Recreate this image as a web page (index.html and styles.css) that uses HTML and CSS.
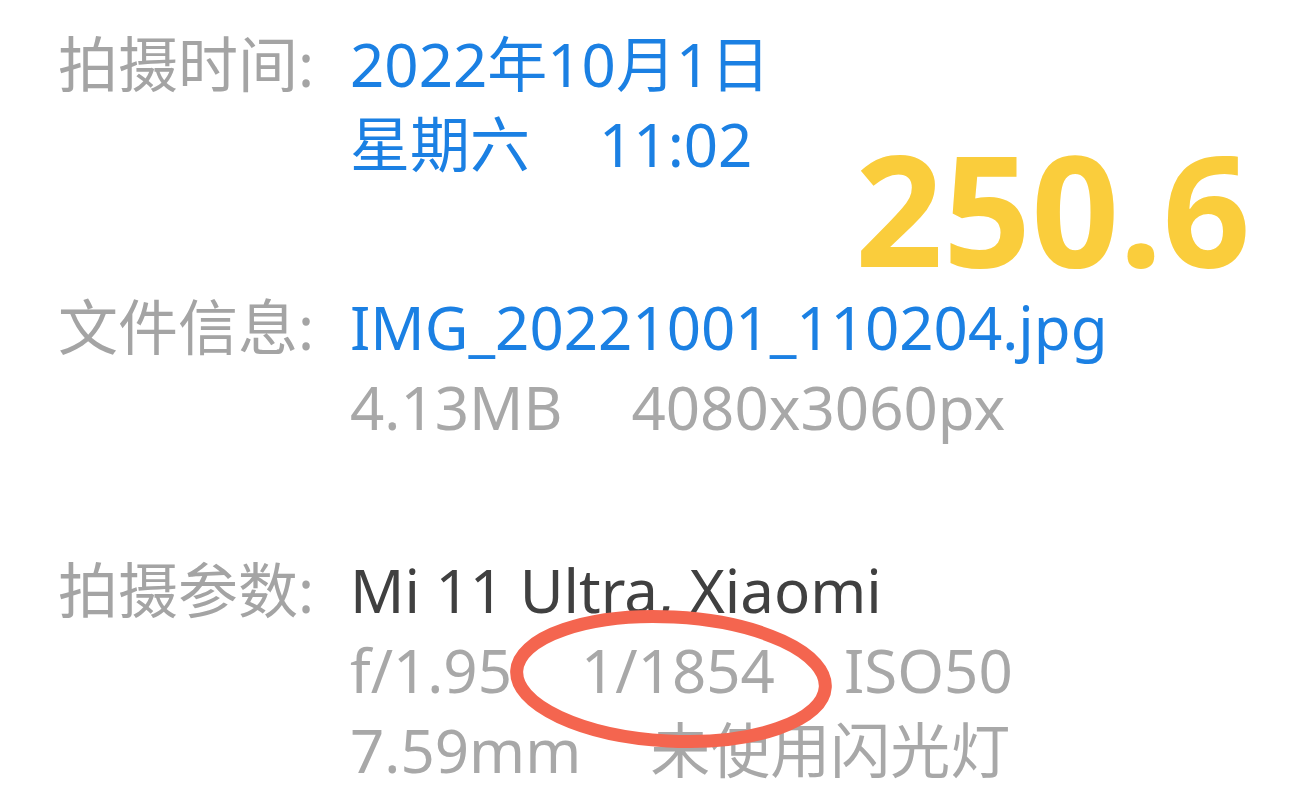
FILE: index.html
```html
<!DOCTYPE html>
<html lang="zh-CN">
<head>
<meta charset="utf-8">
<title>照片详情</title>
<link rel="stylesheet" href="styles.css">
</head>
<body>
<main class="sheet">
  <section class="group">
    <div class="label">拍摄时间:</div>
    <div class="values tone-blue">
      <div class="line">2022年10月1日</div>
      <div class="line split"><span>星期六</span><span>11:02</span></div>
    </div>
  </section>

  <section class="group">
    <div class="label">文件信息:</div>
    <div class="values">
      <div class="line tone-blue">IMG_20221001_110204.jpg</div>
      <div class="line split tone-gray"><span>4.13MB</span><span>4080x3060px</span></div>
    </div>
  </section>

  <section class="group">
    <div class="label">拍摄参数:</div>
    <div class="values">
      <div class="line tone-dark">Mi 11 Ultra, Xiaomi</div>
      <div class="line split tone-gray"><span>f/1.95</span><span>1/1854</span><span>ISO50</span></div>
      <div class="line split tone-gray"><span>7.59mm</span><span>未使用闪光灯</span></div>
    </div>
  </section>

  <div class="score">250.6</div>

  <svg class="ring" width="344" height="160" viewBox="0 0 344 160" aria-hidden="true">
    <ellipse cx="171" cy="80" rx="154.5" ry="62" transform="rotate(3 171 80)" fill="none" stroke="#f4654f" stroke-width="13"/>
  </svg>
</main>
</body>
</html>
```

FILE: styles.css
```css
html, body {
  margin: 0;
  padding: 0;
  background: #ffffff;
}

body {
  width: 1308px;
  height: 793px;
  overflow: hidden;
  font-family: "Noto Sans", "Noto Sans CJK SC", sans-serif;
  font-size: 60px;
  line-height: 80px;
}

.sheet {
  position: relative;
  display: flex;
  flex-direction: column;
  gap: 103px;
  padding: 24px 0 0 58px;
}

.group {
  display: flex;
  align-items: flex-start;
}

.label {
  flex: 0 0 292px;
  color: #a4a4a4;
  white-space: nowrap;
}

.values {
  display: flex;
  flex-direction: column;
}

.line {
  white-space: nowrap;
}

.split {
  display: flex;
  gap: 69px;
}

.tone-blue {
  color: #1b80e3;
}

.tone-gray {
  color: #a8a8a8;
}

.tone-dark {
  color: #404040;
}

.score {
  position: absolute;
  left: 855px;
  top: 147px;
  font-size: 154px;
  line-height: 120px;
  font-weight: 700;
  color: #facd3c;
  white-space: nowrap;
}

.ring {
  position: absolute;
  left: 500px;
  top: 599px;
}
```
